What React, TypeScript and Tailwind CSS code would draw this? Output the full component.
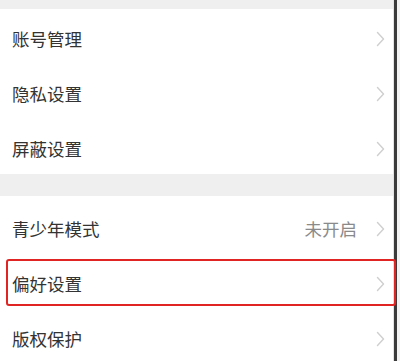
import React from 'react';

function Chevron() {
  return (
    <svg width="9" height="16" viewBox="0 0 9 16" fill="none" className="shrink-0">
      <path d="M1.5 1.5 L7.5 8 L1.5 14.5" stroke="#cfcfcf" strokeWidth="1.4" strokeLinecap="round" strokeLinejoin="round" />
    </svg>
  );
}

function Row({ label, value, low }: { label: string; value?: string; low?: boolean }) {
  return (
    <div className={`h-[56px] flex items-center justify-between pl-[12px] pr-[8px] bg-white ${low ? 'pt-[11px]' : 'pt-[5px]'}`}>
      <span className="text-[17.5px] text-[#333333] leading-none">{label}</span>
      <div className="flex items-center gap-[19px]">
        {value && <span className="text-[17.5px] text-[#8a8a8a] leading-none">{value}</span>}
        <Chevron />
      </div>
    </div>
  );
}

export default function App() {
  return (
    <div
      className="relative w-[400px] h-[361px] overflow-hidden bg-white flex"
      style={{ fontFamily: '"Noto Sans CJK SC", "Noto Sans", sans-serif' }}
    >
      {/* settings list */}
      <div className="flex-1 flex flex-col border-r border-[#e2e2e2]">
        <div className="h-[9px] bg-[#efefef] shrink-0" />
        <Row label="账号管理" />
        <Row label="隐私设置" />
        <Row label="屏蔽设置" />
        <div className="h-[22px] bg-[#efefef] shrink-0" />
        <Row label="青少年模式" value="未开启" low />
        <Row label="偏好设置" low />
        <Row label="版权保护" low />
      </div>

      {/* window edge */}
      <div className="w-[3px] bg-[#3a3a3a] shrink-0" />
      <div className="w-[3px] bg-[#f2f2f2] shrink-0" />

      {/* highlight box */}
      <div className="absolute left-[6px] top-[259px] w-[390px] h-[47px] border-2 border-[#e02424] rounded-[3px]" />
    </div>
  );
}
